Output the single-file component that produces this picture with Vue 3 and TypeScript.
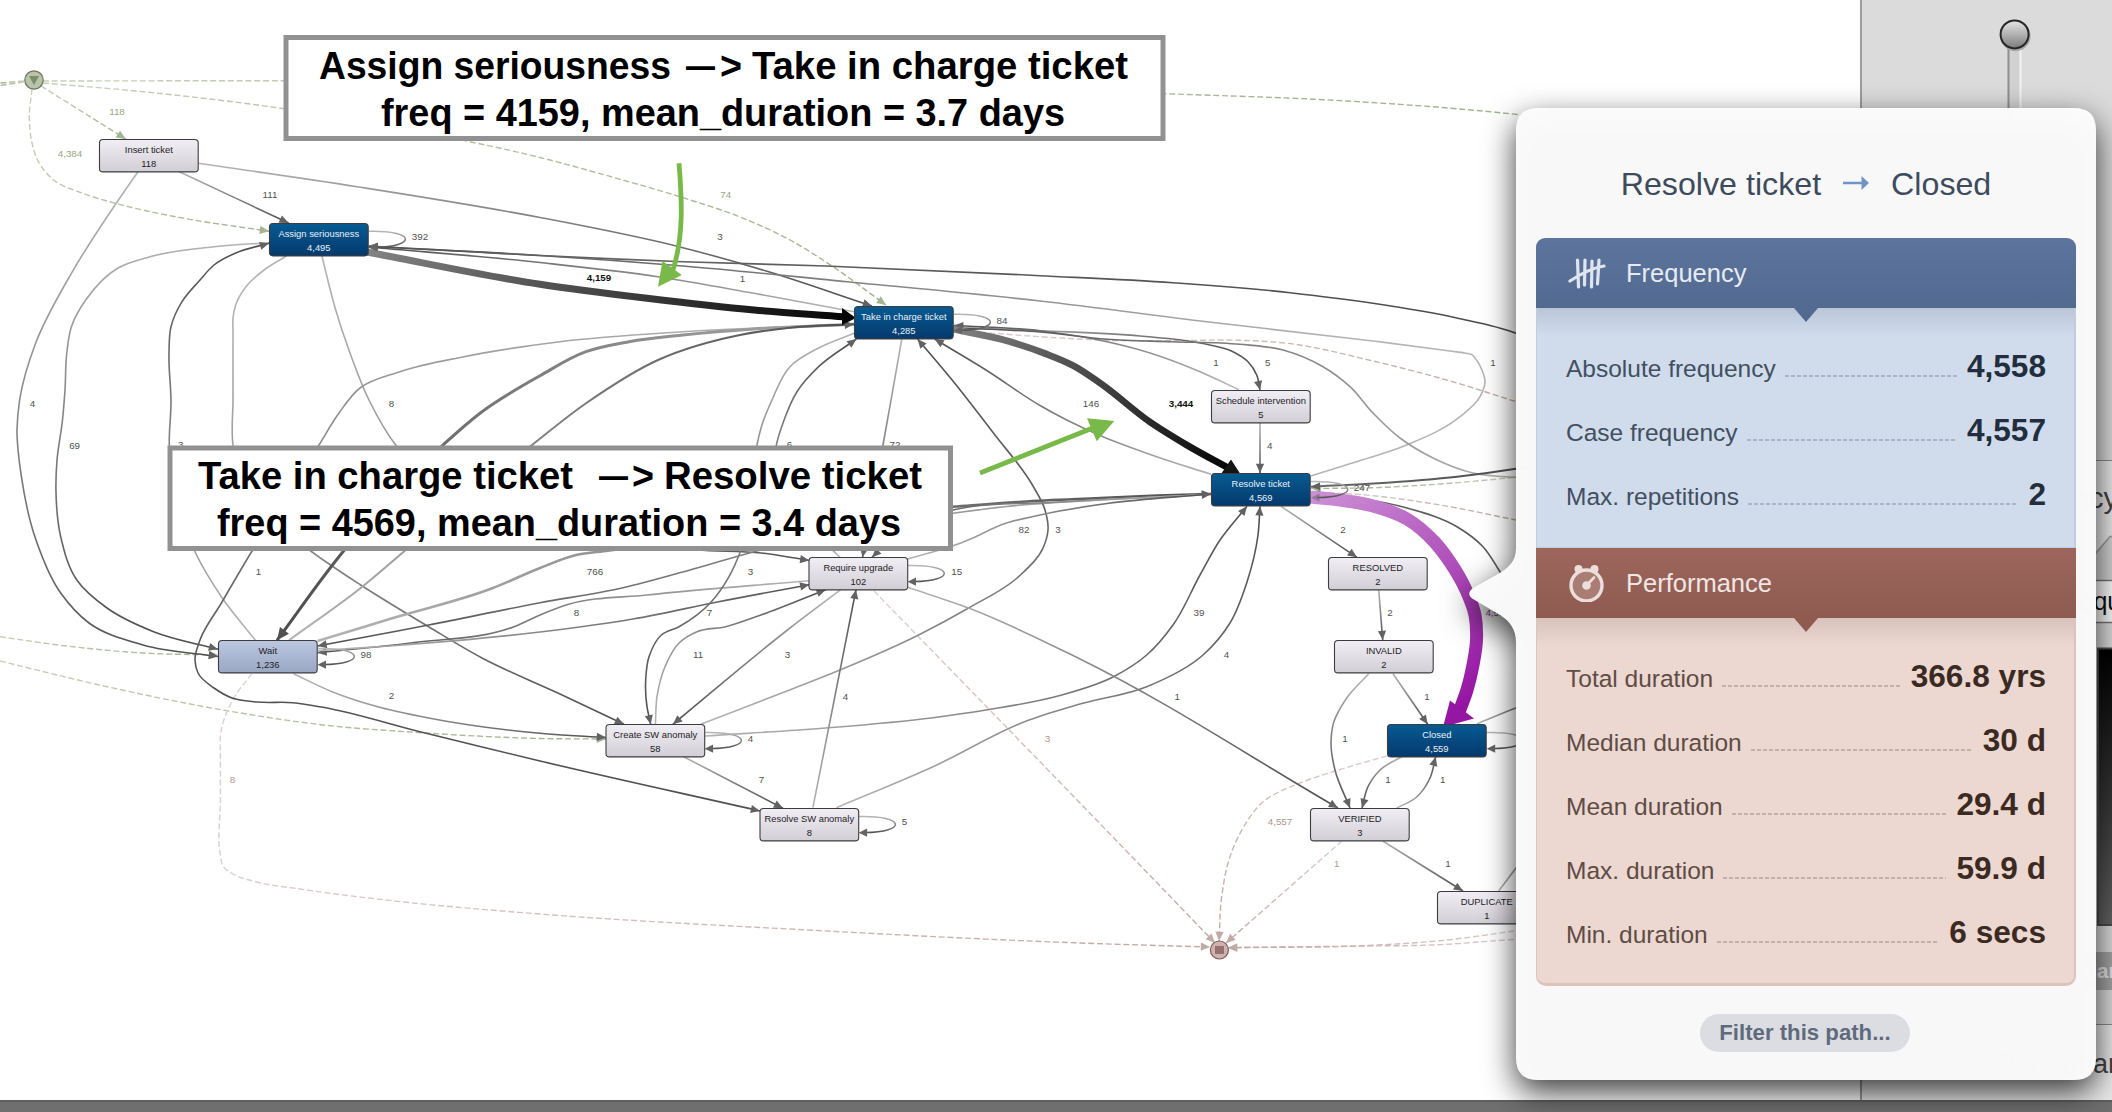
<script setup lang="ts">
type Pt = [number, number]
type Kind = 'flow' | 'steady' | 'start' | 'end' | 'heavy' | 'medium' | 'selected'

interface Edge {
  kind: Kind
  pts: Pt[]
  width: number
  arrow: boolean
}

interface NodeBox {
  x: number
  y: number
  name: string
  count: string
  tone: 'light' | 'dark' | 'mid'
}

const palette: Record<Kind, { from: string; to: string; head: string }> = {
  flow: { from: '#b4b4b4', to: '#505050', head: '#626262' },
  steady: { from: '#4a4a4a', to: '#686868', head: '#626262' },
  start: { from: '#c6d0b8', to: '#a3b18f', head: '#a5b492' },
  end: { from: '#dfcece', to: '#bfaba5', head: '#c0aca6' },
  heavy: { from: '#828282', to: '#050505', head: '#0a0a0a' },
  medium: { from: '#a8a8a8', to: '#4c4c4c', head: '#505050' },
  selected: { from: '#cc8fd5', to: '#9414a2', head: '#9516a3' },
}

function edge(kind: Kind, flat: number[], width = 0, arrow = true): Edge {
  const pts: Pt[] = []
  for (let i = 0; i < flat.length; i += 2) pts.push([flat[i], flat[i + 1]])
  const base = kind === 'flow' || kind === 'steady' ? 1.6 : kind === 'start' || kind === 'end' ? 1.4 : 2
  return { kind, pts, width: width || base, arrow }
}

const edges: Edge[] = [
  // paths that leave the start marker
  edge('start', [24, 81, 0, 83], 0, false),
  edge('start', [24, 82, 0, 85.5], 0, false),
  edge('start', [43, 81, 284, 80.7, 700, 82, 1165, 93.7, 1347, 101, 1500, 112.7, 1540, 117], 0, false),
  edge('start', [43, 83, 143, 91.7, 284, 108.7, 468, 141.3, 540, 157.5, 611, 176.7, 683, 197.7, 740, 217, 790, 240, 833, 266.7, 886, 305]),
  edge('start', [41, 86, 125.7, 139]),
  edge('start', [32, 89, 29.3, 116.7, 31.4, 140, 37.5, 160, 53.6, 180, 82, 193, 118, 204, 178.6, 217.3, 269, 231.3]),
  edge('start', [0, 636.7, 64, 645.7, 143, 653, 218, 655]),
  edge('start', [0, 661, 107, 686.7, 228.6, 711, 321, 724.7, 421, 732.7, 540, 738.5, 606, 739]),
  edge('start', [1540, 475, 1516, 477.3, 1440, 484, 1380, 487.5, 1311, 488.5]),

  // paths that run to the end marker
  edge('end', [252, 673.7, 235.7, 695, 225, 716.7, 220.4, 736, 220.4, 750, 220.4, 800, 220.4, 855, 223, 866, 233, 874, 255, 881.5, 300, 889, 404, 902, 540, 914, 808, 930, 1080, 943, 1210, 947]),
  edge('end', [874, 591, 1080, 803, 1215, 943]),
  edge('end', [1387, 756, 1333, 771.7, 1300, 783, 1261.7, 803, 1243, 828, 1230, 856.7, 1221.7, 896.7, 1219, 941]),
  edge('end', [1342, 841, 1226, 943]),
  edge('end', [1540, 927, 1515.7, 930.7, 1440, 940.7, 1363, 945.7, 1228, 947.7]),
  edge('end', [1540, 938, 1516, 939.3, 1433, 945, 1363, 946, 1228, 947.7]),
  edge('end', [954, 330, 1040, 336.7, 1107, 340.3, 1173, 340.7, 1240, 340.3, 1287, 343.3, 1373, 361, 1457, 383, 1516, 401.7], 0, false),
  edge('end', [1311, 491.7, 1373, 495.7, 1440, 505, 1516, 520], 0, false),

  // activity to activity
  edge('flow', [138, 171.7, 115, 205, 71.4, 273.3, 35.7, 343, 19.6, 400, 17, 430, 21.4, 476.7, 36, 540, 60.7, 593, 89, 623, 143, 645, 218, 656.5]),
  edge('flow', [269, 242.7, 214, 246.7, 150, 256.7, 118, 268, 85.7, 300, 71.4, 326.7, 66.8, 353, 65, 390, 62.5, 420, 57, 460, 56, 493, 60.7, 536.7, 76.8, 580, 107, 608, 153.6, 631.7, 218, 649.3]),
  edge('flow', [255.4, 640.3, 221.4, 596.7, 194.6, 551, 176, 500, 169.3, 445, 171, 403, 169, 353, 171, 326.7, 182, 301.7, 200, 280, 214, 265, 235.7, 253, 269, 243.3]),
  edge('flow', [286.8, 255.7, 264, 270, 246, 286.7, 235.7, 305, 233, 318, 233, 330, 233, 400, 233, 445, 250, 500, 310.7, 551, 360.7, 585, 428.6, 626.7, 482, 658, 560, 694, 624, 724.3]),
  edge('flow', [321.8, 255.7, 335.7, 310, 350, 353, 369, 400, 395.7, 445, 470, 505, 697, 550, 761.4, 553, 809.3, 560.5]),
  edge('flow', [854, 324.3, 683, 331.7, 560, 341.7, 464, 356.7, 400, 371.7, 360, 388, 339, 413, 319, 445, 252, 551, 221.4, 603, 200, 640, 195, 660, 198, 673, 214, 688, 232, 698, 257, 702, 293, 702.7, 321.4, 707, 421, 732, 540, 761, 760, 811]),
  edge('medium', [854, 324.3, 754, 329, 683, 335, 629, 341.7, 586, 351.7, 540, 375.7, 482, 411.7, 443, 445, 343.6, 551, 277, 640.3], 3),
  edge('flow', [289, 640.3, 360.7, 588, 404.6, 551, 532, 445, 586.4, 403, 658, 360, 740, 335, 790, 327.7, 854, 324.3], 2.1),
  edge('flow', [317.5, 641, 393, 618, 493, 588, 540, 568, 576, 555, 608, 550.7, 780, 520, 953, 506.7, 1022, 501.7, 1100, 498, 1157, 495.5, 1211, 494], 2.6),
  edge('flow', [1211, 494.5, 1100, 500, 1004, 506.7, 953, 513.3, 850, 530, 754, 551.7, 697, 568, 622, 588, 540, 602.7, 428.6, 625, 317.5, 646]),
  edge('flow', [809, 580.7, 647, 595, 568.6, 604.3, 540, 615, 514, 626.7, 410.7, 643, 317.5, 652.7]),
  edge('flow', [317.5, 650.7, 393, 645.7, 540, 632, 633, 619, 718.6, 601.7, 809.3, 584.7]),
  edge('flow', [293.6, 673.7, 332, 691.7, 375, 706, 428.6, 718, 540, 733.3, 606, 737.5]),
  edge('flow', [198.6, 163.3, 357, 186.7, 540, 217.5, 679, 246.7, 768.6, 271.7, 872, 306]),
  edge('flow', [179.3, 171.7, 288.6, 223]),
  edge('steady', [1540, 344, 1516, 333.3, 1456.7, 318, 1373, 303.3, 1290, 292.7, 1173, 282.7, 1040, 275.7, 826, 266, 683, 261.7, 540, 255.5, 368.6, 246]),
  edge('flow', [1310.7, 476, 1356.7, 461.7, 1406.7, 445, 1460, 416.7, 1480, 396.7, 1485, 381.7, 1482, 370, 1475, 358, 1471.7, 354.6, 1466, 353.2, 1450, 351, 1373, 341, 1206.7, 321.7, 1040, 301, 847, 281.7, 683, 266, 540, 255.5, 368.6, 246.5]),
  edge('flow', [854, 311.7, 754, 293.3, 658, 276.7, 540, 262.5, 368.6, 247]),
  edge('flow', [954, 327, 1040, 330.7, 1140, 336, 1200, 343, 1233, 351.7, 1248, 361.7, 1256.7, 375, 1260, 390]),
  edge('flow', [1239, 389.7, 1200, 371.7, 1150, 353, 1090, 338.3, 1040, 330.7, 954, 325.5]),
  edge('flow', [1540, 478, 1516, 477.3, 1473, 473, 1433, 458, 1400, 438, 1373, 413, 1350, 386.7, 1323, 366.7, 1283, 350, 1240, 344.3, 1173, 341.7, 1107, 339.3, 1040, 332, 954, 328]),
  edge('flow', [1260, 422, 1260, 473]),
  edge('steady', [1560, 461, 1516, 468.7, 1457, 476.7, 1373, 483.5, 1311, 486.7], 2),
  edge('steady', [1560, 660, 1530, 617, 1500, 571.7, 1483, 546.7, 1457, 526.7, 1407, 508, 1357, 498, 1311, 493.3]),
  edge('flow', [1211, 474.3, 1156.7, 456.7, 1103, 436.7, 1066.7, 420, 1040, 405.5, 986, 370, 934.6, 339]),
  edge('flow', [700.7, 724.3, 768.6, 698, 840, 670, 918.6, 635, 968.6, 608, 1018.6, 576.7, 1043.6, 546.7, 1048, 530, 1045, 510, 1033, 486, 993.6, 433.3, 950.7, 378.3, 917.5, 339]),
  edge('flow', [854, 333.3, 818.6, 348, 790, 366.7, 772, 400, 761.4, 426.7, 757, 445, 755, 500, 740.7, 550.7, 729, 576.7, 711.4, 601.7, 679, 626.7, 661.4, 635, 649, 656.7, 645.7, 680, 647, 706.7, 650.7, 724.3]),
  edge('flow', [840, 557.3, 833, 550.7, 780, 500, 776.4, 445, 783, 423, 797, 391.7, 818.6, 366.7, 856.4, 339]),
  edge('flow', [901.8, 339, 883, 445, 862.5, 557.3]),
  edge('flow', [1211, 494.5, 1060, 502, 953, 510, 905, 525, 872, 557.3]),
  edge('flow', [907.5, 559, 958, 544, 975.7, 536.7, 1000.7, 525, 1040, 515, 1107, 503.5, 1211, 494]),
  edge('flow', [655.4, 724.3, 657, 696.7, 665, 666.7, 679, 643, 697, 631.7, 725.7, 626.7, 761, 615, 825.7, 589.7]),
  edge('flow', [840.7, 589.7, 790, 628, 672.9, 724.3]),
  edge('flow', [704.6, 736, 825.7, 728, 933, 717.7, 986, 710, 1058, 696, 1113, 677, 1146.7, 655, 1173, 625, 1200, 575, 1220, 540, 1247, 506.3]),
  edge('flow', [836.4, 807.7, 933, 766.7, 1029, 720, 1080, 704, 1146.7, 686.7, 1203, 655, 1230, 623, 1246.7, 583, 1258, 535, 1260, 506.3]),
  edge('flow', [812.9, 807.7, 856, 589.7]),
  edge('flow', [683.6, 756.7, 783, 808.3]),
  edge('flow', [907.5, 587.3, 968.6, 608, 1080, 659, 1338, 808]),
  edge('flow', [1281, 506.3, 1357, 557.3]),
  edge('flow', [1378.7, 589.7, 1382.7, 640]),
  edge('flow', [1393, 673.7, 1427.7, 724.3]),
  edge('flow', [1368.7, 673.7, 1346.7, 698, 1333.5, 723, 1331, 743, 1335, 770, 1350, 808]),
  edge('flow', [1401.7, 756.7, 1380, 770, 1368, 786.7, 1362, 808]),
  edge('flow', [1396.7, 808, 1416.7, 797, 1430, 778, 1435.7, 756.7]),
  edge('flow', [1382.7, 841, 1463, 891]),
  edge('flow', [1498.7, 891, 1516, 868, 1550, 822], 0, false),
  edge('flow', [1476.7, 724, 1516, 708, 1540, 700], 0, false),
]

const heavyEdges: Edge[] = [
  edge('heavy', [367, 252, 540, 284.3, 647, 298.3, 754, 310, 844, 316.8], 7, false),
  edge('heavy', [952, 329, 1004, 340, 1045, 353.5, 1073, 365.5, 1100, 383, 1150, 422, 1186.7, 445, 1230, 469], 6.8, false),
]

const selectedEdge = edge('selected', [1310.7, 497, 1340, 500, 1373, 506, 1407, 519, 1435, 542.5, 1450, 562, 1466, 590, 1475, 615, 1476.5, 640, 1473, 665, 1467, 690, 1459, 712], 13, false)

// cubic segments with tangents weighted by the neighbouring segment lengths
function smooth(p: Pt[]): string {
  const dist = (m: Pt, n: Pt) => Math.hypot(n[0] - m[0], n[1] - m[1]) || 1
  const dir = (i: number): Pt => {
    const b = p[i]
    const a = p[i - 1]
    const c = p[i + 1]
    let v: Pt
    if (!a) v = [c[0] - b[0], c[1] - b[1]]
    else if (!c) v = [b[0] - a[0], b[1] - a[1]]
    else {
      const l1 = dist(a, b)
      const l2 = dist(b, c)
      v = [
        ((b[0] - a[0]) / l1) * l2 + ((c[0] - b[0]) / l2) * l1,
        ((b[1] - a[1]) / l1) * l2 + ((c[1] - b[1]) / l2) * l1,
      ]
    }
    const l = Math.hypot(v[0], v[1]) || 1
    return [v[0] / l, v[1] / l]
  }
  let d = `M${p[0][0]} ${p[0][1]}`
  for (let i = 0; i < p.length - 1; i++) {
    const b = p[i]
    const c = p[i + 1]
    const s = dist(b, c) / 3
    const u = dir(i)
    const w = dir(i + 1)
    const f = (v: number) => v.toFixed(1)
    d += `C${f(b[0] + u[0] * s)} ${f(b[1] + u[1] * s)} ${f(c[0] - w[0] * s)} ${f(c[1] - w[1] * s)} ${c[0]} ${c[1]}`
  }
  return d
}

function head(e: Edge): string {
  const [x, y] = e.pts[e.pts.length - 1]
  const [px, py] = e.pts[e.pts.length - 2]
  const len = Math.hypot(x - px, y - py) || 1
  const ux = (x - px) / len
  const uy = (y - py) / len
  const l = e.kind === 'medium' ? 12.5 : 9.2
  const w = e.kind === 'medium' ? 5.6 : 4.1
  const bx = x - ux * l
  const by = y - uy * l
  return `${x},${y} ${bx - uy * w},${by + ux * w} ${bx + uy * w},${by - ux * w}`
}

const allEdges = [...edges, ...heavyEdges, selectedEdge]
const last = (p: Pt[]) => p[p.length - 1]
const dashed = (k: Kind) => k === 'start' || k === 'end'

const nodes: NodeBox[] = [
  { x: 99.5, y: 139.5, name: 'Insert ticket', count: '118', tone: 'light' },
  { x: 269.5, y: 223.5, name: 'Assign seriousness', count: '4,495', tone: 'dark' },
  { x: 854.5, y: 306.5, name: 'Take in charge ticket', count: '4,285', tone: 'dark' },
  { x: 1211.5, y: 390.5, name: 'Schedule intervention', count: '5', tone: 'light' },
  { x: 1211.5, y: 473.5, name: 'Resolve ticket', count: '4,569', tone: 'dark' },
  { x: 1328.5, y: 557.5, name: 'RESOLVED', count: '2', tone: 'light' },
  { x: 1334.5, y: 640.5, name: 'INVALID', count: '2', tone: 'light' },
  { x: 1387.5, y: 724.5, name: 'Closed', count: '4,559', tone: 'dark' },
  { x: 1310.5, y: 808.5, name: 'VERIFIED', count: '3', tone: 'light' },
  { x: 1437.5, y: 891.5, name: 'DUPLICATE', count: '1', tone: 'light' },
  { x: 218.5, y: 640.5, name: 'Wait', count: '1,236', tone: 'mid' },
  { x: 809, y: 557.5, name: 'Require upgrade', count: '102', tone: 'light' },
  { x: 606, y: 724.5, name: 'Create SW anomaly', count: '58', tone: 'light' },
  { x: 760, y: 808.5, name: 'Resolve SW anomaly', count: '8', tone: 'light' },
]

const loops: Pt[] = [
  [368.6, 223], [953.6, 306], [1311, 473.3], [317.5, 640.3], [907.5, 557.3], [704.6, 724.3], [858.6, 808.3], [1486.7, 724.3],
]

const labels: { x: number; y: number; t: string; c?: string }[] = [
  { x: 117, y: 110.7, t: '118', c: 'green' }, { x: 70, y: 152.7, t: '4,384', c: 'green' },
  { x: 270, y: 193.7, t: '111' }, { x: 420, y: 235.7, t: '392' },
  { x: 725.7, y: 193.7, t: '74', c: 'green' }, { x: 720, y: 235.7, t: '3' },
  { x: 599, y: 277.5, t: '4,159', c: 'strong' }, { x: 742.5, y: 278, t: '1' },
  { x: 1002, y: 319.7, t: '84' }, { x: 789.6, y: 444.5, t: '6' }, { x: 895, y: 444.5, t: '72' },
  { x: 1216, y: 361.7, t: '1' }, { x: 1267.7, y: 361.7, t: '5' }, { x: 1091, y: 402.7, t: '146' },
  { x: 1181, y: 402.7, t: '3,444', c: 'strong' }, { x: 1493, y: 361.7, t: '1' },
  { x: 1269.7, y: 444.7, t: '4' }, { x: 1362, y: 487, t: '247' }, { x: 1343, y: 528.7, t: '2' },
  { x: 1058, y: 528.7, t: '3' }, { x: 1199, y: 611.7, t: '39' }, { x: 1390, y: 611.7, t: '2' },
  { x: 1497.7, y: 611.7, t: '4,557', c: 'purple' }, { x: 32.5, y: 402.7, t: '4' },
  { x: 74.6, y: 444.7, t: '69' }, { x: 180.7, y: 444.5, t: '3' }, { x: 391.4, y: 402.7, t: '8' },
  { x: 258.6, y: 570.7, t: '1' }, { x: 366, y: 653.7, t: '98' }, { x: 391.4, y: 695.3, t: '2' },
  { x: 232.5, y: 778.7, t: '8', c: 'pink' }, { x: 595, y: 570.7, t: '766' },
  { x: 750.4, y: 570.7, t: '3' }, { x: 576.4, y: 611.7, t: '8' }, { x: 709.6, y: 611.7, t: '7' },
  { x: 956.8, y: 570.7, t: '15' }, { x: 1024, y: 528.7, t: '82' }, { x: 698, y: 653.7, t: '11' },
  { x: 787.5, y: 653.7, t: '3' }, { x: 845.4, y: 696, t: '4' }, { x: 750.4, y: 738, t: '4' },
  { x: 761.4, y: 778.7, t: '7' }, { x: 904.6, y: 820.7, t: '5' }, { x: 1047.5, y: 738, t: '3', c: 'pink' },
  { x: 1226.5, y: 653.7, t: '4' }, { x: 1177.3, y: 695.7, t: '1' }, { x: 1427, y: 695.7, t: '1' },
  { x: 1345, y: 737.7, t: '1' }, { x: 1388, y: 778.7, t: '1' }, { x: 1442.7, y: 778.7, t: '1' },
  { x: 1280, y: 821, t: '4,557', c: 'pink' }, { x: 1336.7, y: 862.7, t: '1', c: 'pink' },
  { x: 1448, y: 862.7, t: '1' },
]

const frequency = [
  { label: 'Absolute frequency', value: '4,558' },
  { label: 'Case frequency', value: '4,557' },
  { label: 'Max. repetitions', value: '2' },
]
const performance = [
  { label: 'Total duration', value: '366.8 yrs' },
  { label: 'Median duration', value: '30 d' },
  { label: 'Mean duration', value: '29.4 d' },
  { label: 'Max. duration', value: '59.9 d' },
  { label: 'Min. duration', value: '6 secs' },
]
</script>

<template>
  <div class="window">
    <div class="workspace">
      <main class="map">
        <svg class="graph" width="1860" height="1100" viewBox="0 0 1860 1100">
          <defs>
            <linearGradient
              v-for="(e, i) in allEdges" :id="'edge' + i" :key="i" gradientUnits="userSpaceOnUse"
              :x1="e.pts[0][0]" :y1="e.pts[0][1]" :x2="last(e.pts)[0] + 0.01" :y2="last(e.pts)[1] + 0.01"
            >
              <stop offset="0" :stop-color="palette[e.kind].from" />
              <stop offset="1" :stop-color="palette[e.kind].to" />
            </linearGradient>
            <linearGradient id="loopInk" x1="0" y1="0" x2="0" y2="1">
              <stop offset="0" stop-color="#b6b6b6" /><stop offset="1" stop-color="#545454" />
            </linearGradient>
            <linearGradient id="light" x1="0" y1="0" x2="0" y2="1">
              <stop offset="0" stop-color="#f1eef5" /><stop offset="1" stop-color="#d2ced6" />
            </linearGradient>
            <linearGradient id="dark" x1="0" y1="0" x2="0" y2="1">
              <stop offset="0" stop-color="#075b92" /><stop offset="1" stop-color="#04396d" />
            </linearGradient>
            <linearGradient id="mid" x1="0" y1="0" x2="0" y2="1">
              <stop offset="0" stop-color="#bcc8e2" /><stop offset="1" stop-color="#9aa7c2" />
            </linearGradient>
          </defs>

          <g v-for="(e, i) in allEdges" :key="'p' + i">
            <path
              :d="smooth(e.pts)" fill="none" :stroke="`url(#edge${i})`" :stroke-width="e.width"
              :stroke-dasharray="dashed(e.kind) ? '6 2.8' : undefined"
            />
            <polygon v-if="e.arrow" :points="head(e)" :fill="palette[e.kind].head" />
          </g>
          <polygon points="842,308 842,325 856,318" fill="#050505" />
          <polygon points="1231,459.5 1221,474 1241,475" fill="#141414" />
          <polygon points="1450,700.5 1474,718.5 1443,727" fill="#9516a3" />

          <g v-for="(l, i) in loops" :key="'l' + i">
            <path
              :d="`M${l[0]} ${l[1] + 8.3}C${l[0] + 48} ${l[1] + 7} ${l[0] + 48} ${l[1] + 24} ${l[0] + 6} ${l[1] + 24.3}`"
              fill="none" stroke="url(#loopInk)" stroke-width="1.5"
            />
            <polygon :points="`${l[0]},${l[1] + 24.4} ${l[0] + 8.5},${l[1] + 20.2} ${l[0] + 8.5},${l[1] + 28.4}`" fill="#646464" :fill-opacity="i === 2 ? 0.5 : 1" />
          </g>

          <text v-for="(l, i) in labels" :key="'t' + i" :x="l.x" :y="l.y + 3.8" class="edge-label" :class="l.c">{{ l.t }}</text>

          <g v-for="n in nodes" :key="n.name">
            <rect :x="n.x" :y="n.y" width="98.7" height="32.4" rx="3.5" :fill="`url(#${n.tone})`" stroke="#3c3c40" stroke-width="1.1" />
            <text :x="n.x + 49.3" :y="n.y + 13.9" class="node-text" :class="n.tone">{{ n.name }}</text>
            <text :x="n.x + 49.3" :y="n.y + 27.4" class="node-text" :class="n.tone">{{ n.count }}</text>
          </g>

          <circle cx="34" cy="80" r="9.2" fill="#b9c4a8" stroke="#6d7562" stroke-width="1.2" />
          <path d="M29 76H39L34 85Z" fill="#7d8b6f" />
          <circle cx="1219.4" cy="950" r="9" fill="#cfb1ae" stroke="#7c5e5c" stroke-width="1.2" />
          <rect x="1215" y="946" width="9" height="8" fill="#97716f" />

          <path d="M679 163.3C682 200 684 238 672 273" fill="none" stroke="#78b94a" stroke-width="4.8" />
          <polygon points="662.5,261 681.8,275 658,286.7" fill="#78b94a" />
          <path d="M980 473L1094 427.5" fill="none" stroke="#78b94a" stroke-width="4.8" />
          <polygon points="1087,418.3 1114.3,421 1096.7,441.3" fill="#78b94a" />

          <g class="note">
            <rect x="286" y="37.5" width="877" height="101" />
            <text x="319" y="78.5" textLength="352" lengthAdjust="spacingAndGlyphs">Assign seriousness</text>
            <text x="686" y="78.5" textLength="29" lengthAdjust="spacingAndGlyphs">—</text>
            <text x="720" y="78.5" textLength="22" lengthAdjust="spacingAndGlyphs">&gt;</text>
            <text x="752" y="78.5" textLength="376" lengthAdjust="spacingAndGlyphs">Take in charge ticket</text>
            <text x="381" y="126" textLength="684" lengthAdjust="spacingAndGlyphs">freq = 4159, mean_duration = 3.7 days</text>
          </g>
          <g class="note">
            <rect x="170" y="448" width="780.5" height="100.5" />
            <text x="198" y="488.5" textLength="375" lengthAdjust="spacingAndGlyphs">Take in charge ticket</text>
            <text x="599" y="488.5" textLength="29" lengthAdjust="spacingAndGlyphs">—</text>
            <text x="632" y="488.5" textLength="22" lengthAdjust="spacingAndGlyphs">&gt;</text>
            <text x="664" y="488.5" textLength="258" lengthAdjust="spacingAndGlyphs">Resolve ticket</text>
            <text x="217" y="535.5" textLength="684" lengthAdjust="spacingAndGlyphs">freq = 4569, mean_duration = 3.4 days</text>
          </g>
        </svg>
      </main>

      <aside class="side">
        <svg width="250" height="1100" viewBox="1862 0 250 1100">
          <defs>
            <linearGradient id="knob" x1="0" y1="0" x2="0" y2="1">
              <stop offset="0" stop-color="#e6e6e6" /><stop offset="1" stop-color="#7c7c7c" />
            </linearGradient>
            <linearGradient id="swatch" x1="0" y1="0" x2="0" y2="1">
              <stop offset="0" stop-color="#000" /><stop offset="1" stop-color="#636363" />
            </linearGradient>
          </defs>
          <rect x="2007.5" y="40" width="14" height="400" fill="#d2d2d2" />
          <rect x="2007.5" y="40" width="2" height="400" fill="#8f8f8f" />
          <rect x="2019.5" y="40" width="2" height="400" fill="#f4f4f4" />
          <circle cx="2015.4" cy="36" r="15.2" fill="#a9a9a9" />
          <circle cx="2014.6" cy="34.4" r="14" fill="url(#knob)" stroke="#262626" stroke-width="2" />
          <rect x="1862" y="460" width="250" height="121" fill="#e9e9e9" />
          <path d="M1862 460.5H2112" stroke="#8c8c8c" />
          <path d="M2060 505L2096 553L2110 536.5H2112V580H2040Z" fill="#d2d2d2" />
          <path d="M2060 505L2096 553L2110 536.5H2112" fill="none" stroke="#9c9c9c" stroke-width="1.6" />
          <text x="1981" y="508" font-size="29" class="side-text">Frequency</text>
          <rect x="1900" y="580.5" width="230" height="42" fill="#fbfbfb" stroke="#777" stroke-width="1.5" />
          <text x="1960" y="610" font-size="25" class="side-text black">Absolute frequency</text>
          <rect x="2098" y="648.5" width="30" height="276.5" fill="url(#swatch)" stroke="#4a4a4a" stroke-width="2" />
          <rect x="2010" y="952" width="102" height="38" fill="#a4a4a4" />
          <text x="2023" y="977.5" font-size="20.5" font-weight="700" class="side-text pale">Secondary</text>
          <rect x="1862" y="1024" width="250" height="76" fill="#eaeaea" />
          <path d="M1862 1024.5H2112" stroke="#8c8c8c" />
          <text x="1997" y="1072.5" font-size="27" class="side-text">Performance</text>
        </svg>
      </aside>
    </div>
    <footer class="status"></footer>

    <section class="popover">
      <svg class="bubble" width="627" height="972" viewBox="1469 108 627 972">
        <path d="M1538 108H2074Q2096 108 2096 130V1058Q2096 1080 2074 1080H1538Q1516 1080 1516 1058V642C1516 630 1510 621 1500 615L1473 599Q1465.5 594 1473 588L1498 574C1508 568 1516 562 1516 548V130Q1516 108 1538 108Z" />
      </svg>
      <div class="sheet">
        <h1 class="title">
          <span>Resolve ticket</span>
          <svg width="26" height="14" viewBox="0 0 26 14"><path d="M0 5.8H18.5V0L26 7L18.5 14V8.2H0Z" /></svg>
          <span>Closed</span>
        </h1>
        <div class="card freq">
          <header>
            <svg width="38" height="32" viewBox="0 0 38 32" fill="none" stroke="#dfe5ef" stroke-linecap="round" stroke-width="3.2">
              <path d="M9.5 3L10.5 30M17 3L16.5 28M24 4L23.5 30M31 3L29.5 27M2 24C14 16 24 11 36 9" />
            </svg>
            <span>Frequency</span>
          </header>
          <dl>
            <div v-for="r in frequency" :key="r.label" class="row">
              <dt>{{ r.label }}</dt><i></i><dd>{{ r.value }}</dd>
            </div>
          </dl>
        </div>
        <div class="card perf">
          <header>
            <svg width="38" height="38" viewBox="0 0 38 38">
              <circle cx="10.5" cy="5" r="4" fill="#ecdedb" /><circle cx="26.5" cy="5" r="4" fill="#ecdedb" />
              <circle cx="18.5" cy="21.5" r="15.5" fill="#a97c74" stroke="#ecdedb" stroke-width="3.4" />
              <circle cx="18.5" cy="21.5" r="4.3" fill="#ecdedb" />
              <path d="M18.5 21.5L26 13.5" stroke="#ecdedb" stroke-width="2.6" stroke-linecap="round" />
            </svg>
            <span>Performance</span>
          </header>
          <dl>
            <div v-for="r in performance" :key="r.label" class="row">
              <dt>{{ r.label }}</dt><i></i><dd>{{ r.value }}</dd>
            </div>
          </dl>
        </div>
        <button class="filter" type="button">Filter this path...</button>
      </div>
    </section>
  </div>
</template>

<style>
body {
  overflow: hidden;
}
</style>

<style scoped>
.window {
  position: relative;
  display: flex;
  flex-direction: column;
  width: 2112px;
  height: 1112px;
  overflow: hidden;
  background: #fff;
  font-family: "Liberation Sans", Arial, sans-serif;
}
.workspace {
  display: flex;
  height: 1100px;
}
.map {
  width: 1860px;
}
.graph,
.side svg {
  display: block;
}
.side {
  width: 250px;
  border-left: 2px solid #9d9d9d;
  background: #dbdbdb;
}
.status {
  height: 10px;
  border-top: 2px solid #5f5f5f;
  background: #6f6f6f;
}
.edge-label {
  font-size: 9.8px;
  fill: #505050;
  text-anchor: middle;
}
.edge-label.green {
  fill: #98a585;
}
.edge-label.pink {
  fill: #ab9591;
}
.edge-label.purple {
  fill: #8d3a98;
}
.edge-label.strong {
  font-weight: 700;
  fill: #111;
}
.node-text {
  font-size: 9.4px;
  fill: #1c1c1e;
  text-anchor: middle;
}
.node-text.dark {
  fill: #e9f1f8;
}
.note rect {
  fill: #fff;
  stroke: #919191;
  stroke-width: 5px;
}
.note text {
  font-size: 38px;
  font-weight: 700;
  fill: #000;
}
.side-text {
  fill: #444;
}
.side-text.black {
  fill: #111;
}
.side-text.pale {
  fill: #e6e6e6;
}
.popover {
  position: absolute;
  left: 1469px;
  top: 108px;
  width: 627px;
  height: 972px;
}
.bubble {
  position: absolute;
  inset: 0;
  overflow: visible;
  filter: drop-shadow(0 12px 16px rgba(0, 0, 0, 0.78));
}
.bubble path {
  fill: rgba(251, 251, 251, 0.985);
}
.sheet {
  position: relative;
  display: flex;
  flex-direction: column;
  align-items: center;
  width: 540px;
  margin-left: 67px;
}
.title {
  display: flex;
  align-items: center;
  justify-content: center;
  gap: 22px;
  height: 130px;
  margin: 0;
  padding-top: 22px;
  box-sizing: border-box;
  color: #3e4b5d;
  font-size: 32.2px;
  font-weight: 400;
  line-height: 40px;
}
.card {
  width: 540px;
  box-sizing: border-box;
}
.title svg {
  margin-top: -2px;
  fill: #7094c6;
}
.card header {
  position: relative;
  display: flex;
  align-items: center;
  height: 70px;
  padding-left: 32px;
  font-size: 25.5px;
}
.card header span {
  margin-left: 20px;
}
.card header::after {
  content: "";
  position: absolute;
  left: 258px;
  top: 100%;
  border: 12px solid transparent;
  border-bottom: 0;
  border-top: 14px solid var(--tip);
}
.card dl {
  box-sizing: border-box;
  margin: 0;
  padding: 26px 28px 0 29px;
}
.row {
  display: flex;
  align-items: baseline;
  height: 64px;
}
.row dt {
  font-size: 24.5px;
}
.row i {
  flex: 1;
  height: 2px;
  margin: 0 10px 0 9px;
  background: repeating-linear-gradient(90deg, var(--dot) 0 4px, transparent 4px 6px);
}
.row dd {
  margin: 0;
  font-size: 31.6px;
  font-weight: 700;
  line-height: 64px;
}
.freq {
  --tip: #526990;
  --dot: #a9b5c6;
  color: #424f61;
}
.freq header {
  border-radius: 9px 9px 0 0;
  background: linear-gradient(#5d759c, #526990);
  color: #e6ebf3;
}
.freq dl {
  height: 240px;
  border: solid #bfcde0;
  border-width: 0 2px 1px 1px;
  background: linear-gradient(#bac6d7, #d0dcec 28px);
}
.freq dd {
  color: #222d3d;
}
.perf {
  --tip: #8f5a50;
  --dot: #c6afa8;
  color: #5e4c45;
}
.perf header {
  background: linear-gradient(#9c665d, #8f5a50);
  color: #f1e6e4;
}
.perf dl {
  height: 368px;
  border: solid #dcc3bc;
  border-width: 0 2px 3px 1px;
  border-radius: 0 0 10px 10px;
  background: linear-gradient(#d8c3bc, #ecd8d1 28px);
}
.perf dd {
  color: #3b2a22;
}
.filter {
  width: 210px;
  height: 38px;
  margin-top: 28px;
  margin-right: 2px;
  padding: 0;
  border: 0;
  border-radius: 19px;
  background: #dcdde3;
  color: #5f6b7c;
  font: 700 22.2px "Liberation Sans", Arial, sans-serif;
}
</style>
